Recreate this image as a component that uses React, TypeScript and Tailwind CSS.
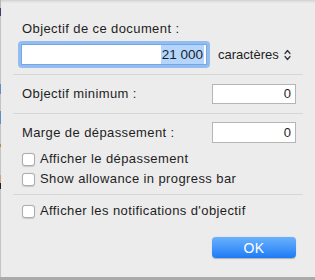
function Checkbox({ label }: { label: string }) {
  return (
    <div className="h-5 flex items-center pl-[9px] gap-[5px]">
      <div className="w-[13px] h-[13px] rounded-[3px] border border-[#acacac] bg-white shadow-[0_0.5px_1px_rgba(0,0,0,0.15)]" />
      <span className="leading-4">{label}</span>
    </div>
  )
}

function NumberField({ value }: { value: string }) {
  return (
    <div className="w-[84px] h-full border border-[#b5b5b5] bg-white flex items-center justify-end pr-[4px] leading-4 tracking-normal">
      {value}
    </div>
  )
}

export default function App() {
  return (
    <div className="w-[315px] h-[280px] bg-[#aaaaaa] flex flex-col overflow-hidden font-['Liberation_Sans',Arial,sans-serif] text-[13px] tracking-[0.4px] text-[#1e1e1e]">
      <div className="flex h-[277px]">
        {/* window behind the sheet */}
        <div className="w-px flex flex-col">
          <div className="h-[8px] bg-[#b8b8b8]" />
          <div className="h-[8px] bg-[#4a3a64]" />
          <div className="h-[68px] bg-[#c4c4c4]" />
          <div className="h-[10px] bg-[#5f8fc4]" />
          <div className="h-[17px] bg-[#c4c4c4]" />
          <div className="h-[13px] bg-[#5f8fc4]" />
          <div className="h-[20px] bg-[#c4c4c4]" />
          <div className="h-[3px] bg-[#b08a50]" />
          <div className="h-[28px] bg-[#c4c4c4]" />
          <div className="h-[8px] bg-[#c9a77e]" />
          <div className="h-[6px] bg-[#222]" />
          <div className="flex-1 bg-[#c4c4c4]" />
        </div>

        <div className="flex-1 bg-[#ececec] shadow-[inset_0_3px_3px_-2px_rgba(0,0,0,0.15)] px-3 pt-[21px] flex flex-col">
          <div className="h-4 leading-4 pl-[9px]">Objectif de ce document :</div>

          <div className="mt-1 h-[27px] flex items-center pl-[5px]">
            <div className="w-[192px] h-[27px] rounded-[4px] bg-[#93bdf1] p-[3px]">
              <div className="h-full bg-white border border-[#78a6e4] flex items-center justify-end pr-[2px]">
                <span className="bg-[#b4d6fe] h-[19px] leading-[19px] px-[1px] text-[13.5px] tracking-normal">21 000</span>
              </div>
            </div>
            <span className="ml-2 leading-4 tracking-normal">caractères</span>
            <svg className="ml-[5px]" width="7" height="12" viewBox="0 0 7 12" fill="none" stroke="#333" strokeWidth="1.2" strokeLinecap="round" strokeLinejoin="round">
              <path d="M1 4.5 3.5 1.5 6 4.5" />
              <path d="M1 7.5 3.5 10.5 6 7.5" />
            </svg>
          </div>

          <div className="mt-[6px] h-px bg-[#d6d6d6]" />

          <div className="mt-[9px] h-5 flex items-center justify-between pl-[9px] pr-[7px]">
            <span className="leading-4">Objectif minimum :</span>
            <NumberField value="0" />
          </div>

          <div className="mt-[9px] h-px bg-[#d6d6d6]" />

          <div className="mt-2 h-[21px] flex items-center justify-between pl-[9px] pr-[7px]">
            <span className="leading-4">Marge de dépassement :</span>
            <NumberField value="0" />
          </div>

          <div className="mt-[6px]">
            <Checkbox label="Afficher le dépassement" />
            <Checkbox label="Show allowance in progress bar" />
          </div>

          <div className="mt-[5px] h-px bg-[#d6d6d6]" />

          <div className="mt-[6px]">
            <Checkbox label="Afficher les notifications d'objectif" />
          </div>

          <div className="mt-4 self-end mr-[7px] w-[84px] h-[21px] rounded-[4px] bg-gradient-to-b from-[#69b1fb] to-[#1a7bf6] shadow-[0_0.5px_1px_rgba(0,0,0,0.25)] flex items-center justify-center text-white text-[14px] leading-4">
            OK
          </div>
        </div>
      </div>
    </div>
  )
}
